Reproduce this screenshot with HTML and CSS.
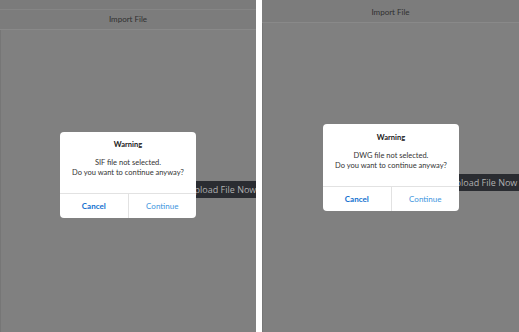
FILE: index.html
```html
<!DOCTYPE html>
<html lang="en">
<head>
  <meta charset="UTF-8">
  <meta name="viewport" content="width=device-width, initial-scale=1.0">
  <title>Import File</title>
  <link rel="stylesheet" href="styles.css">
</head>
<body>
  <section class="panel panel-left">
    <div class="top-strip"></div>
    <header class="panel-head">Import File</header>
    <div class="panel-body">
      <div class="side-rail">
        <span class="rail-mark"></span>
        <span class="rail-mark"></span>
        <span class="rail-mark"></span>
      </div>
      <div class="content">
        <button class="upload-button">Upload File Now</button>
      </div>
    </div>
    <div class="dialog">
      <h2 class="dialog-title">Warning</h2>
      <p class="dialog-text">SIF file not selected.<br>Do you want to continue anyway?</p>
      <div class="dialog-actions">
        <button class="dialog-btn cancel">Cancel</button>
        <button class="dialog-btn continue">Continue</button>
      </div>
    </div>
  </section>

  <section class="panel panel-right">
    <header class="panel-head">Import File</header>
    <div class="panel-body">
      <div class="side-rail">
        <span class="rail-mark"></span>
        <span class="rail-mark"></span>
        <span class="rail-mark"></span>
      </div>
      <div class="content">
        <button class="upload-button">Upload File Now</button>
      </div>
    </div>
    <div class="dialog">
      <h2 class="dialog-title">Warning</h2>
      <p class="dialog-text">DWG file not selected.<br>Do you want to continue anyway?</p>
      <div class="dialog-actions">
        <button class="dialog-btn cancel">Cancel</button>
        <button class="dialog-btn continue">Continue</button>
      </div>
    </div>
  </section>
</body>
</html>
```

FILE: styles.css
```css
body {
  margin: 0;
  padding: 0;
  display: flex;
  gap: 6px;
  height: 332px;
  overflow: hidden;
  background: #ffffff;
  font-family: 'Lato', 'Open Sans', sans-serif;
}

.panel {
  position: relative;
  display: flex;
  flex-direction: column;
  height: 332px;
  overflow: hidden;
  background: #808080;
}

.panel-left {
  width: 256px;
}

.panel-right {
  flex: 1;
}

.top-strip {
  height: 9px;
  background: #7b7b7b;
  border-bottom: 1px solid #858585;
}

.panel-head {
  height: 19px;
  line-height: 19px;
  text-align: center;
  font-size: 8px;
  color: #303030;
  background: #7c7c7c;
  border-bottom: 1px solid #898989;
}

.panel-right .panel-head {
  height: 22px;
  line-height: 24px;
}

.panel-body {
  flex: 1;
  display: flex;
}

.side-rail {
  width: 3px;
  display: flex;
  flex-direction: column;
  gap: 28px;
  padding-top: 4px;
  background: #7d7d7d;
}

.panel-right .side-rail {
  width: 4px;
}

.rail-mark {
  height: 14px;
  background: #767676;
}

.content {
  flex: 1;
  border-left: 1px solid #767676;
  padding: 151px 0 0 179px;
}

.panel-right .content {
  padding-left: 178px;
}

.upload-button {
  display: block;
  height: 17px;
  padding: 0 8px;
  border: none;
  border-radius: 2px;
  background: #2a2c31;
  color: #b0b0b0;
  font-family: 'Open Sans', 'Noto Sans', sans-serif;
  font-size: 9px;
  white-space: nowrap;
}

/* the alert sits over the dimmed page */
.dialog {
  position: absolute;
  left: 60px;
  top: 132px;
  width: 136px;
  height: 86px;
  display: flex;
  flex-direction: column;
  background: #ffffff;
  border-radius: 4px;
  text-align: center;
}

.panel-right .dialog {
  left: 61px;
  top: 124px;
  height: 87px;
}

.dialog-title {
  margin: 8px 0 0;
  font-size: 7.5px;
  line-height: 10px;
  font-weight: 700;
  color: #1a1a1a;
}

.panel-right .dialog-title {
  margin-top: 9px;
}

.dialog-text {
  margin: 8px 0 0;
  font-size: 7.5px;
  line-height: 10px;
  color: #333333;
}

.dialog-actions {
  margin-top: auto;
  height: 24px;
  display: flex;
  border-top: 1px solid #e2e2e2;
}

.dialog-btn {
  flex: 1;
  border: none;
  background: none;
  padding: 0;
  font-family: 'Lato', 'Open Sans', sans-serif;
  font-size: 8px;
  cursor: pointer;
}

.dialog-btn.cancel {
  font-weight: 700;
  color: #1170cf;
  border-right: 1px solid #e2e2e2;
}

.dialog-btn.continue {
  color: #3d95de;
}
```
